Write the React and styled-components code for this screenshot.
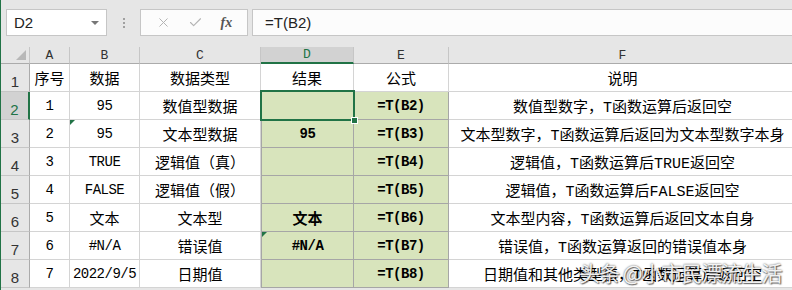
import React, {Fragment} from 'react';
import styled, {createGlobalStyle, css} from 'styled-components';
import {X, Check} from 'lucide-react';

const GlobalStyle = createGlobalStyle`
  html, body {
    margin: 0;
    padding: 0;
    background: #ffffff;
    overflow: hidden;
  }
`;

const CJK = `"Noto Sans CJK SC", sans-serif`;
const MONO = `"Liberation Mono", "Noto Sans CJK SC", monospace`;

const Window = styled.div`
  position: relative;
  width: 791px;
  height: 290px;
  border-left: 1px solid #217346;
  background: #e6e6e6;
  overflow: hidden;
`;

const FormulaBar = styled.div`
  display: flex;
  align-items: flex-start;
  height: 47px;
  padding: 9px 0 0 5px;
  box-sizing: border-box;
`;

const NameBox = styled.div`
  position: relative;
  display: flex;
  align-items: center;
  width: 101px;
  height: 27px;
  box-sizing: border-box;
  padding-left: 7px;
  background: #fff;
  border: 1px solid #c6c6c6;
  font-family: "Liberation Sans", sans-serif;
  font-size: 15px;
  color: #222;

  &:after {
    content: '';
    position: absolute;
    right: 7px;
    top: 11px;
    border-left: 4px solid transparent;
    border-right: 4px solid transparent;
    border-top: 4px solid #777;
  }
`;

const Dots = styled.div`
  display: flex;
  flex-direction: column;
  align-items: center;
  gap: 2px;
  width: 33px;
  padding-top: 9px;

  span {
    width: 2px;
    height: 2px;
    background: #a0a0a0;
  }
`;

const FxButtons = styled.div`
  display: flex;
  align-items: center;
  justify-content: space-around;
  width: 108px;
  height: 27px;
  box-sizing: border-box;
  padding: 0 6px;
  background: #fcfcfc;
  border: 1px solid #c6c6c6;
  color: #b4b4b4;
`;

const Fx = styled.span`
  font-family: "Liberation Serif", serif;
  font-style: italic;
  font-weight: bold;
  font-size: 14px;
  color: #555;
`;

const FormulaInput = styled.div`
  flex: 1;
  display: flex;
  align-items: center;
  height: 27px;
  margin-left: 4px;
  box-sizing: border-box;
  padding-left: 12px;
  background: #fcfcfc;
  border-top: 1px solid #c6c6c6;
  border-bottom: 1px solid #c6c6c6;
  border-left: 1px solid #c6c6c6;
  font-family: "Liberation Sans", sans-serif;
  font-size: 15px;
  color: #222;
`;

const Sheet = styled.div`
  display: grid;
  grid-template-columns: 29px 40px 70px 121px 93px 95px 348px;
  grid-template-rows: 17px repeat(8, 28px);
  background: #fff;
`;

const Corner = styled.div`
  position: relative;
  background: #e6e6e6;
  border-right: 1px solid #c6c6c6;
  border-bottom: 1px solid #ababab;

  &:after {
    content: '';
    position: absolute;
    right: 3px;
    bottom: 3px;
    border-left: 10px solid transparent;
    border-bottom: 10px solid #b8b8b8;
  }
`;

const ColHeader = styled.div`
  display: flex;
  align-items: center;
  justify-content: center;
  box-sizing: border-box;
  background: ${p => (p.$active ? '#d2d2d2' : '#e6e6e6')};
  border-right: 1px solid #c6c6c6;
  border-bottom: ${p => (p.$active ? '2px solid #217346' : '1px solid #ababab')};
  font-family: "Liberation Mono", monospace;
  font-size: 13px;
  color: ${p => (p.$active ? '#217346' : '#333')};
`;

const RowHeader = styled.div`
  display: flex;
  align-items: flex-end;
  justify-content: center;
  box-sizing: border-box;
  padding-bottom: 1px;
  background: ${p => (p.$active ? '#d2d2d2' : '#e6e6e6')};
  border-right: ${p => (p.$active ? '2px solid #217346' : '1px solid #ababab')};
  border-bottom: 1px solid #c6c6c6;
  font-family: "Liberation Sans", sans-serif;
  font-size: 15px;
  color: ${p => (p.$active ? '#217346' : '#333')};
`;

const Cell = styled.div`
  position: relative;
  display: flex;
  align-items: center;
  justify-content: center;
  box-sizing: border-box;
  white-space: nowrap;
  overflow: visible;
  border-right: 1px solid #d4d4d4;
  border-bottom: 1px solid #d4d4d4;
  font-family: ${p => (p.$mono ? MONO : `"Liberation Mono", ${CJK}`)};
  font-size: ${p => (p.$mono ? '14px' : '15px')};
  letter-spacing: ${p => (p.$mono ? '-0.5px' : '0')};
  font-weight: ${p => (p.$bold ? 'bold' : 'normal')};
  color: #000;

  ${p => p.$fill && css`
    background: #d8e4bc;
    border-right-color: #a6a6a6;
    border-bottom-color: #a6a6a6;
  `}

  ${p => p.$leftEdge && css`
    border-left: 1px solid #a6a6a6;
  `}

  ${p => p.$flag && css`
    &:before {
      content: '';
      position: absolute;
      left: 0;
      top: 0;
      border-top: 5px solid #217346;
      border-right: 5px solid transparent;
    }
  `}

  ${p => p.$selected && css`
    &:after {
      content: '';
      position: absolute;
      left: -2px;
      top: -2px;
      right: -2px;
      bottom: -2px;
      border: 2px solid #217346;
      z-index: 2;
    }
  `}
`;

const FillHandle = styled.span`
  position: absolute;
  right: -5px;
  bottom: -5px;
  width: 5px;
  height: 5px;
  background: #217346;
  border: 1px solid #fff;
  z-index: 3;
`;

const Watermark = styled.div`
  position: absolute;
  left: 578px;
  top: 262px;
  font-family: ${CJK};
  font-size: 21px;
  line-height: 1;
  letter-spacing: -1px;
  white-space: nowrap;
  color: rgba(255, 255, 255, 0.92);
  text-shadow: 0 0 2px rgba(0, 0, 0, 0.7), 1px 1px 1px rgba(0, 0, 0, 0.5);
  z-index: 5;
`;

const columns = ['A', 'B', 'C', 'D', 'E', 'F'];

const rows = [
  {no: '序号', data: '数据', type: '数据类型', result: '结果', formula: '公式', note: '说明', header: true},
  {no: '1', data: '95', type: '数值型数据', result: '', formula: '=T(B2)', note: '数值型数字，T函数运算后返回空'},
  {no: '2', data: '95', type: '文本型数据', result: '95', formula: '=T(B3)', note: '文本型数字，T函数运算后返回为文本型数字本身', dataFlag: true},
  {no: '3', data: 'TRUE', type: '逻辑值（真）', result: '', formula: '=T(B4)', note: '逻辑值，T函数运算后TRUE返回空'},
  {no: '4', data: 'FALSE', type: '逻辑值（假）', result: '', formula: '=T(B5)', note: '逻辑值，T函数运算后FALSE返回空'},
  {no: '5', data: '文本', type: '文本型', result: '文本', formula: '=T(B6)', note: '文本型内容，T函数运算后返回文本自身'},
  {no: '6', data: '#N/A', type: '错误值', result: '#N/A', formula: '=T(B7)', note: '错误值，T函数运算返回的错误值本身', resultFlag: true},
  {no: '7', data: '2022/9/5', type: '日期值', result: '', formula: '=T(B8)', note: '日期值和其他类型值，T函数运算后返回空'},
];

const isLatin = s => /^[\x00-\x7f]*$/.test(s);

const App = () => (
  <Fragment>
    <GlobalStyle/>
    <Window>
      <FormulaBar>
        <NameBox>D2</NameBox>
        <Dots><span/><span/><span/></Dots>
        <FxButtons>
          <X size={15} strokeWidth={1.6}/>
          <Check size={15} strokeWidth={1.8}/>
          <Fx>fx</Fx>
        </FxButtons>
        <FormulaInput>=T(B2)</FormulaInput>
      </FormulaBar>

      <Sheet>
        <Corner/>
        {columns.map(c => (
          <ColHeader key={c} $active={c === 'D'}>{c}</ColHeader>
        ))}

        {rows.map((r, i) => {
          const fill = !r.header;
          return (
            <Fragment key={i}>
              <RowHeader $active={i === 1}>{i + 1}</RowHeader>
              <Cell $mono={isLatin(r.no)}>{r.no}</Cell>
              <Cell $mono={isLatin(r.data)} $flag={r.dataFlag}>{r.data}</Cell>
              <Cell $mono={isLatin(r.type)}>{r.type}</Cell>
              <Cell
                $fill={fill}
                $leftEdge={fill}
                $bold={fill}
                $mono={isLatin(r.result)}
                $flag={r.resultFlag}
                $selected={i === 1}
              >
                {r.result}
                {i === 1 && <FillHandle/>}
              </Cell>
              <Cell $fill={fill} $bold={fill} $mono={fill}>{r.formula}</Cell>
              <Cell>{r.note}</Cell>
            </Fragment>
          );
        })}
      </Sheet>

      <Watermark>头条 @小市民漂流生活</Watermark>
    </Window>
  </Fragment>
);

export default App;
